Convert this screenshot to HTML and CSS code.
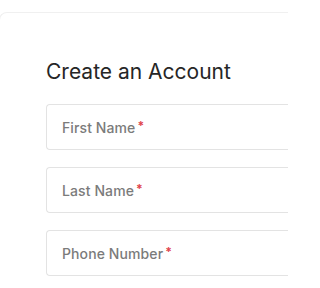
FILE: index.html
```html
<!DOCTYPE html>
<html>
<head>
<meta charset="utf-8">
<link rel="stylesheet" href="styles.css">
</head>
<body>
<div class="card">
  <h1 class="title">Create an Account</h1>
  <div class="fields">
    <div class="field"><span class="label">First Name</span><span class="req">*</span></div>
    <div class="field"><span class="label">Last Name</span><span class="req">*</span></div>
    <div class="field"><span class="label">Phone Number</span><span class="req">*</span></div>
  </div>
</div>
</body>
</html>
```
FILE: styles.css
```css
html, body {
  margin: 0;
  padding: 0;
  background: #ffffff;
}
body {
  width: 288px;
  height: 288px;
  font-family: Inter, "Noto Sans", sans-serif;
}
.card {
  margin-top: 12px;
  margin-left: -1px;
  width: 289px;
  height: 276px;
  border: 1px solid #f0f0f0;
  border-right: none;
  border-bottom: none;
  border-radius: 8px 0 0 0;
  box-sizing: border-box;
  padding: 45px 0 0 46px;
}
.title {
  margin: 0;
  font-size: 21px;
  line-height: 28px;
  font-weight: 400;
  color: #262626;
}
.fields {
  margin-top: 18px;
  display: flex;
  flex-direction: column;
  gap: 17px;
}
.field {
  height: 46px;
  box-sizing: border-box;
  border: 1px solid #e3e3e3;
  border-right: none;
  border-radius: 4px 0 0 4px;
  padding-left: 15px;
  display: flex;
  align-items: center;
  font-size: 14px;
  font-weight: 500;
  color: #7b7b7b;
  letter-spacing: 0.1px;
}
.req {
  color: #e0434b;
  font-size: 12px;
  font-weight: 700;
  margin-left: 2px;
  position: relative;
  top: -2px;
}
```
